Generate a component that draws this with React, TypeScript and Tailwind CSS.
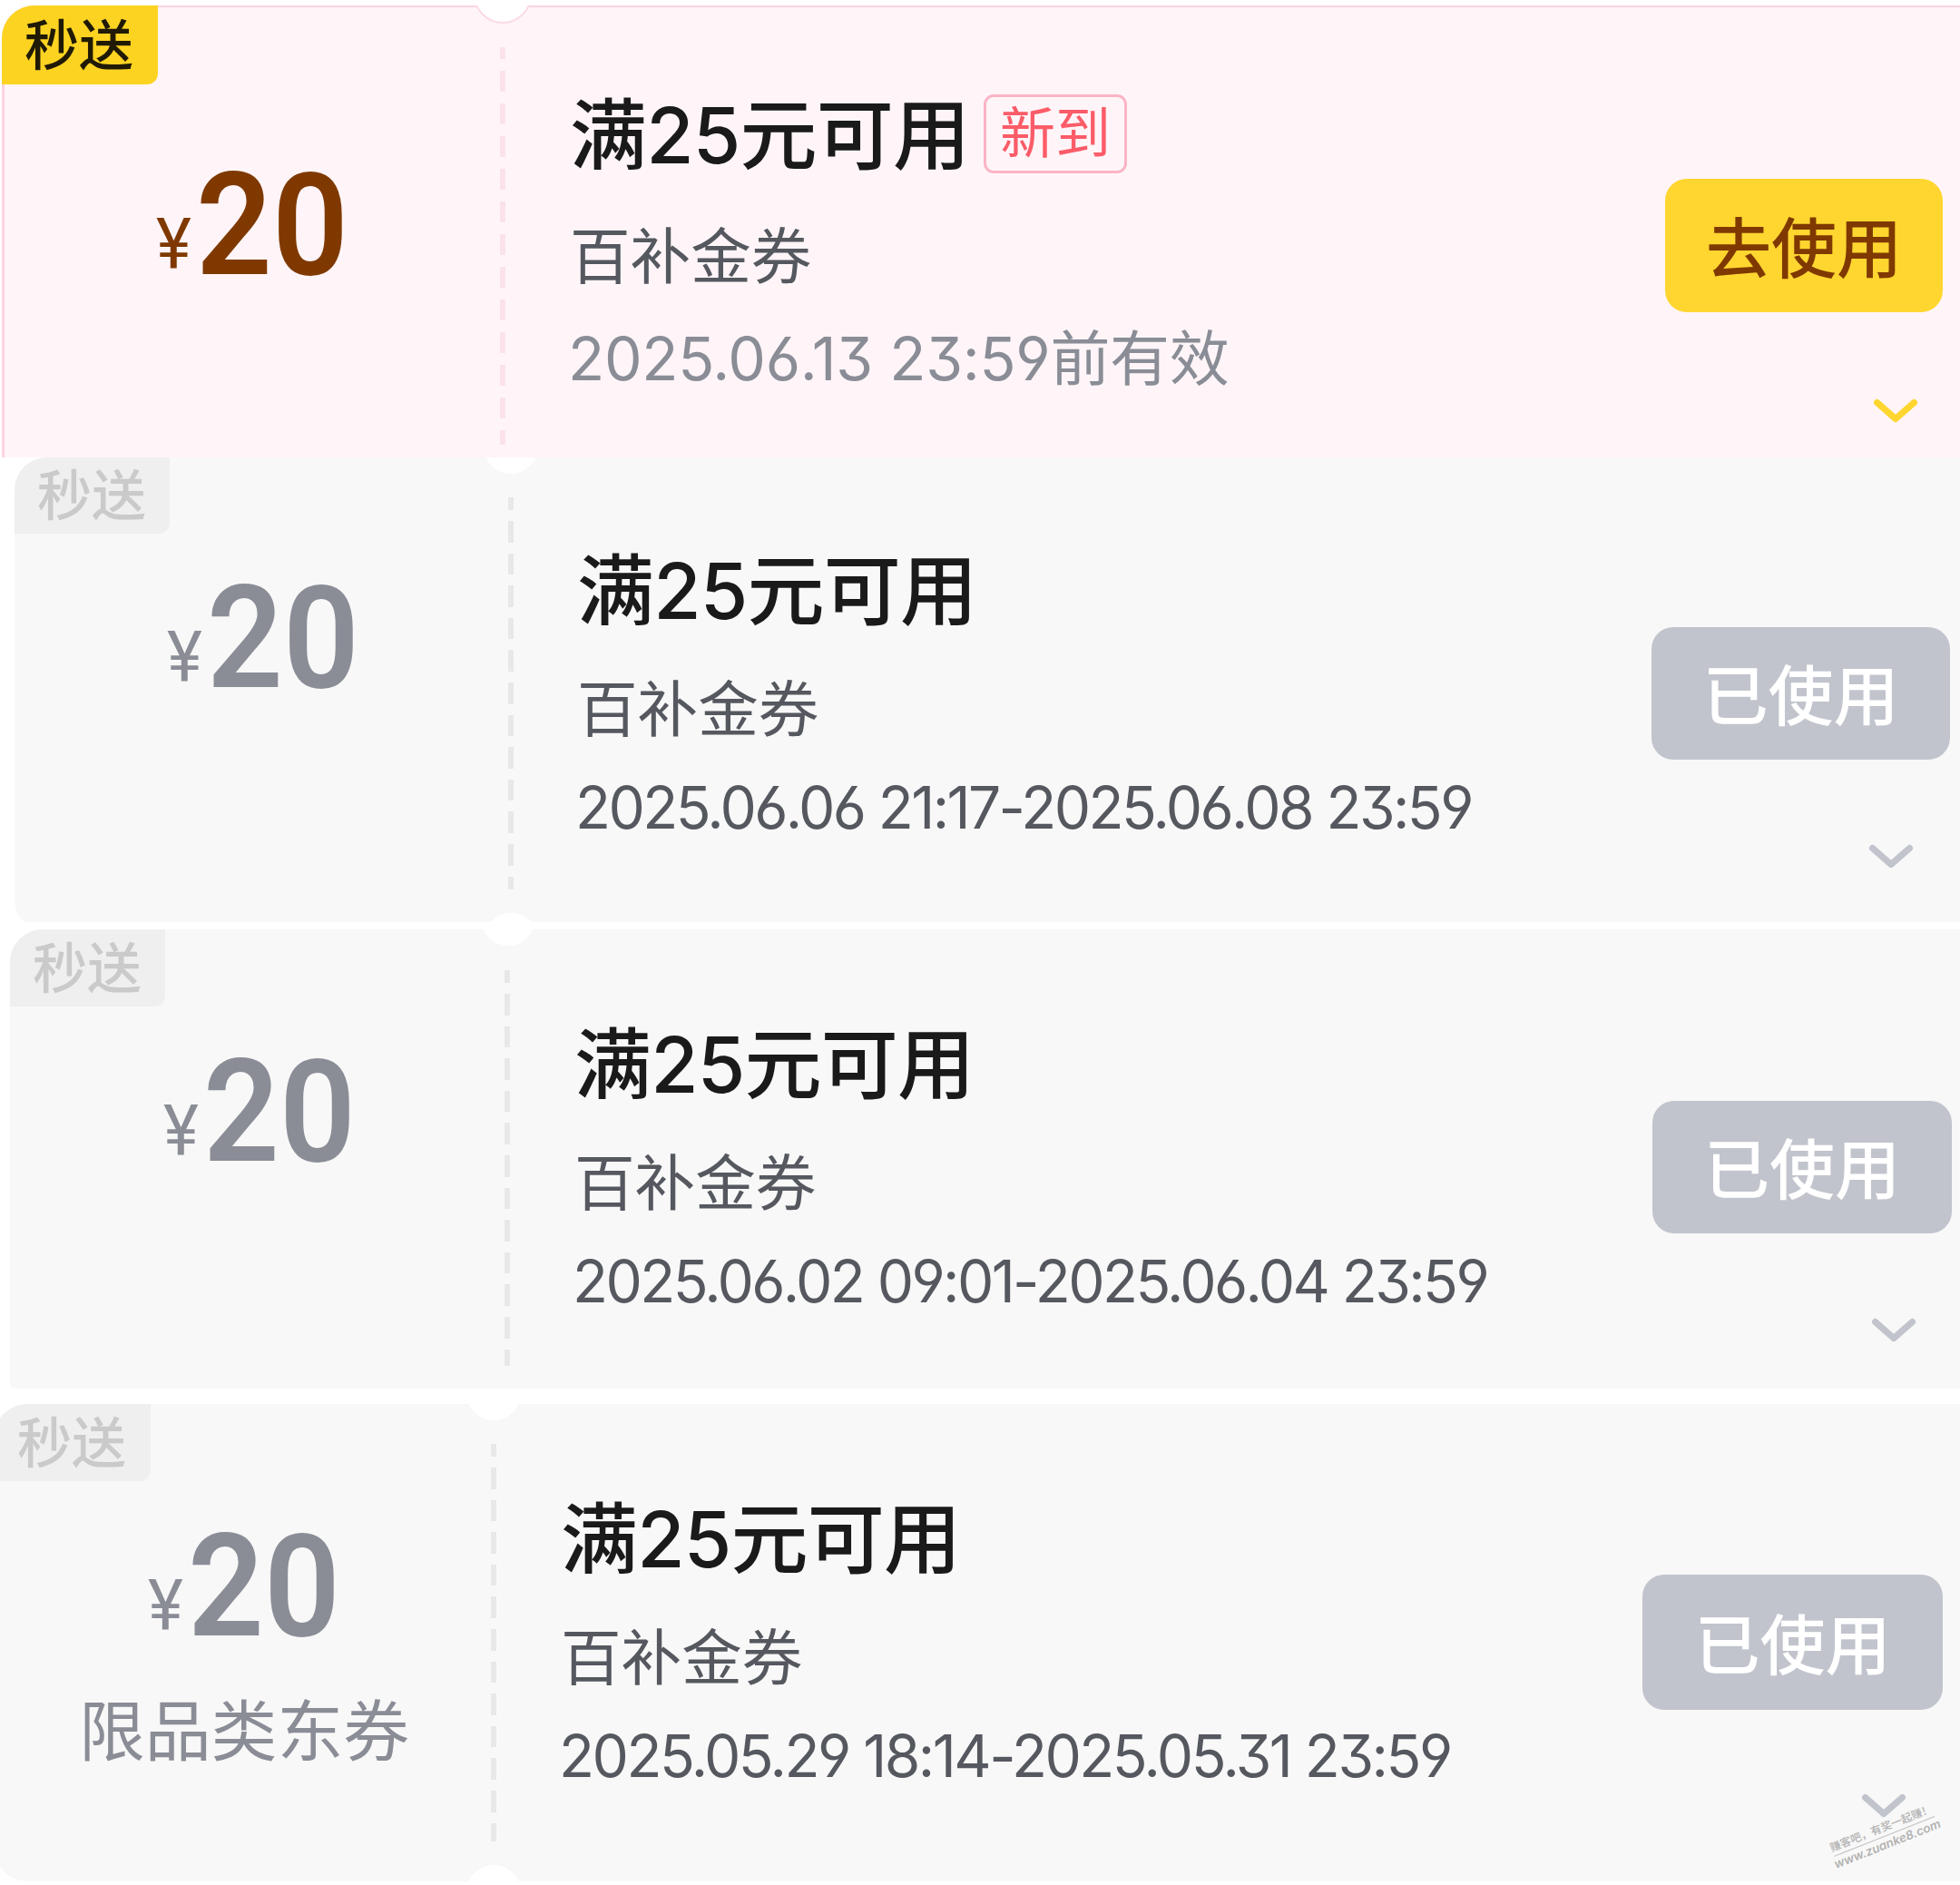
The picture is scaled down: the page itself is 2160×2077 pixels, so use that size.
import clsx from "clsx";

type Coupon = {
  id: string;
  badge: string;
  amount: string;
  category?: string;
  title: string;
  isNew?: boolean;
  subtitle: string;
  validity: string;
  action: string;
  active?: boolean;
  layout: {
    card: string;
    badge: string;
    stub: string;
    price: string;
    line: string;
    notchTop: string;
    notchBottom?: string;
    info: string;
    date: string;
    side: string;
    button: string;
    chevron: string;
  };
};

const coupons: Coupon[] = [
  {
    id: "0613",
    badge: "秒送",
    amount: "20",
    title: "满25元可用",
    isNew: true,
    subtitle: "百补金券",
    validity: "2025.06.13 23:59前有效",
    action: "去使用",
    active: true,
    layout: {
      card: "ml-[2px] mt-[6px] h-[498px] rounded-tl-[36px]",
      badge: "w-[172px] h-[87px] pl-[25px]",
      stub: "w-[549px]",
      price: "pt-[186px] pl-[170px]",
      line: "mt-[46px] h-[438px]",
      notchTop: "left-[520px] -top-[44px]",
      info: "pt-[100px] pl-[71px] gap-[55px]",
      date: "-mt-[11px] text-[66px] tracking-[-0.3px]",
      side: "pt-[191px] pr-[19px]",
      button: "w-[306px] h-[147px]",
      chevron: "mt-[93px] mr-[25px]",
    },
  },
  {
    id: "0606",
    badge: "秒送",
    amount: "20",
    title: "满25元可用",
    subtitle: "百补金券",
    validity: "2025.06.06 21:17-2025.06.08 23:59",
    action: "已使用",
    layout: {
      card: "ml-[16px] h-[512px] rounded-tl-[36px] rounded-bl-[14px_28px]",
      badge: "w-[171px] h-[84px] pl-[25px]",
      stub: "w-[544px]",
      price: "pt-[143px] pl-[168px]",
      line: "mt-[44px] h-[432px]",
      notchTop: "left-[517px] -top-[42px]",
      notchBottom: "left-[517px] -bottom-[50px]",
      info: "pt-[104px] pl-[70px] gap-[52px]",
      date: "-mt-[12px] text-[64px] tracking-[-2.6px]",
      side: "pt-[187px] pr-[11px]",
      button: "w-[329px] h-[146px]",
      chevron: "mt-[91px] mr-[38px]",
    },
  },
  {
    id: "0602",
    badge: "秒送",
    amount: "20",
    title: "满25元可用",
    subtitle: "百补金券",
    validity: "2025.06.02 09:01-2025.06.04 23:59",
    action: "已使用",
    layout: {
      card: "ml-[11px] mt-[8px] h-[506px] rounded-tl-[36px] rounded-bl-[4px_10px]",
      badge: "w-[171px] h-[85px] pl-[25px]",
      stub: "w-[545px]",
      price: "pt-[145px] pl-[169px]",
      line: "mt-[45px] h-[436px]",
      notchTop: "left-[519px] -top-[42px]",
      info: "pt-[106px] pl-[71px] gap-[52px]",
      date: "-mt-[12px] text-[64px] tracking-[-2.6px]",
      side: "pt-[189px] pr-[9px]",
      button: "w-[330px] h-[146px]",
      chevron: "mt-[91px] mr-[37px]",
    },
  },
  {
    id: "0529",
    badge: "秒送",
    amount: "20",
    category: "限品类东券",
    title: "满25元可用",
    subtitle: "百补金券",
    validity: "2025.05.29 18:14-2025.05.31 23:59",
    action: "已使用",
    layout: {
      card: "-ml-[6px] mt-[17px] h-[526px] rounded-tl-[36px] rounded-bl-[36px]",
      badge: "w-[172px] h-[85px] pl-[25px]",
      stub: "w-[547px]",
      price: "pt-[145px] pl-[169px]",
      line: "mt-[44px] h-[438px]",
      notchTop: "left-[520px] -top-[42px]",
      notchBottom: "left-[520px] -bottom-[42px]",
      info: "pt-[106px] pl-[71px] gap-[52px]",
      date: "-mt-[12px] text-[64px] tracking-[-2.5px]",
      side: "pt-[188px] pr-[19px]",
      button: "w-[331px] h-[149px]",
      chevron: "mt-[90px] mr-[38px]",
    },
  },
];

export default function App() {
  return (
    <main className="relative flex h-[2077px] w-[2160px] flex-col overflow-hidden bg-white font-['Inter','Noto_Sans_CJK_SC',sans-serif] [font-feature-settings:'cv03','cv04','cv09']">
      {coupons.map((coupon) => (
        <CouponCard key={coupon.id} coupon={coupon} />
      ))}
      <Watermark />
    </main>
  );
}

function CouponCard({ coupon }: { coupon: Coupon }) {
  const { layout, active } = coupon;

  return (
    <article
      className={clsx(
        "relative flex shrink-0 overflow-hidden",
        active ? "bg-[#fff5f8] shadow-[inset_3px_2px_1px_#fbd3de]" : "bg-[#f8f8f8]",
        layout.card
      )}
    >
      <span
        className={clsx(
          "absolute left-0 top-0 flex items-center rounded-br-[12px] text-[60px] leading-none font-medium",
          active ? "bg-[#fdd321] text-[#201a05]" : "bg-[#efefef] text-[#cacaca]",
          layout.badge
        )}
      >
        {coupon.badge}
      </span>

      <div className={clsx("shrink-0", layout.stub)}>
        <Price amount={coupon.amount} active={active} className={layout.price} />
        {coupon.category && (
          <p className="mt-[65px] pl-[93px] text-[72.8px] leading-[76px] whitespace-nowrap text-[#8a8d96]">
            {coupon.category}
          </p>
        )}
      </div>

      <div
        className={clsx(
          "w-[6px] shrink-0",
          active
            ? "bg-[repeating-linear-gradient(to_bottom,#fbe2e9_0_13px,transparent_13px_26px,#fbe2e9_26px_36px)]"
            : "bg-[repeating-linear-gradient(to_bottom,#e8e8e8_0_14px,transparent_14px_26px,#e8e8e8_26px_35.6px)]",
          layout.line
        )}
      />
      <Notch active={active} className={layout.notchTop} />
      {layout.notchBottom && <Notch className={layout.notchBottom} />}

      <div className={clsx("flex flex-1 flex-col whitespace-nowrap", layout.info)}>
        <div className="flex h-[88px] items-center gap-[16px]">
          <h2 className="text-[85px] leading-[88px] font-medium tracking-[-0.8px] text-[#1a1a1a]">
            {coupon.title}
          </h2>
          {coupon.isNew && (
            <span className="mb-[5px] flex h-[87px] w-[158px] items-center justify-center rounded-[11px] border-[3px] border-[#fab4c5] text-[61px] leading-none text-[#fb5c68]">
              新到
            </span>
          )}
        </div>
        <p className="text-[66.6px] leading-[68px] text-[#55585f]">{coupon.subtitle}</p>
        <p
          className={clsx(
            "-ml-[2px] leading-[68px]",
            active ? "text-[#8a8d96]" : "text-[#55585f]",
            layout.date
          )}
        >
          {coupon.validity}
        </p>
      </div>

      <div className={clsx("flex shrink-0 flex-col items-end", layout.side)}>
        <button
          className={clsx(
            "flex items-center justify-center rounded-[24px] pt-[6px] text-[72px] leading-none font-medium",
            active ? "bg-[#ffd630] text-[#7f3900]" : "bg-[#c1c4cc] text-white",
            layout.button
          )}
        >
          {coupon.action}
        </button>
        <Chevron
          className={clsx(active ? "text-[#ffd630]" : "text-[#c1c4cc]", layout.chevron)}
        />
      </div>
    </article>
  );
}

function Price({
  amount,
  active,
  className,
}: {
  amount: string;
  active?: boolean;
  className: string;
}) {
  return (
    <div
      className={clsx(
        "flex items-end font-['Roboto',sans-serif]",
        active ? "text-[#7f3900]" : "text-[#8a8d96]",
        className
      )}
    >
      <span className="mb-[8px] w-[44px] origin-left scale-x-[0.96] text-[77px] leading-[55px] font-normal">
        ¥
      </span>
      <span className="origin-left scale-x-[0.93] text-[158px] leading-[113px] font-semibold">
        {amount}
      </span>
    </div>
  );
}

function Notch({ active, className }: { active?: boolean; className: string }) {
  return (
    <span
      className={clsx(
        "absolute rounded-full bg-white",
        active ? "size-[64px] border-2 border-[#fbdbe3]" : "size-[60px]",
        className
      )}
    />
  );
}

function Chevron({ className }: { className?: string }) {
  return (
    <svg
      width="54"
      height="32"
      viewBox="0 0 54 32"
      fill="none"
      stroke="currentColor"
      strokeWidth="7"
      strokeLinecap="round"
      strokeLinejoin="round"
      className={className}
    >
      <path d="M6.5 6.5L27 24.5L47.5 6.5" />
    </svg>
  );
}

function Watermark() {
  return (
    <div className="absolute left-[2017px] top-[2005px] flex w-[119px] -rotate-[21.6deg] flex-col items-center whitespace-nowrap text-[#b2b2b2]">
      <span className="text-[12px] leading-[18px] font-medium">赚客吧，有奖一起赚！</span>
      <span className="h-px w-full bg-[#c0c0c0]" />
      <span className="text-[13.4px] leading-[17px] font-semibold italic">www.zuanke8.com</span>
    </div>
  );
}
